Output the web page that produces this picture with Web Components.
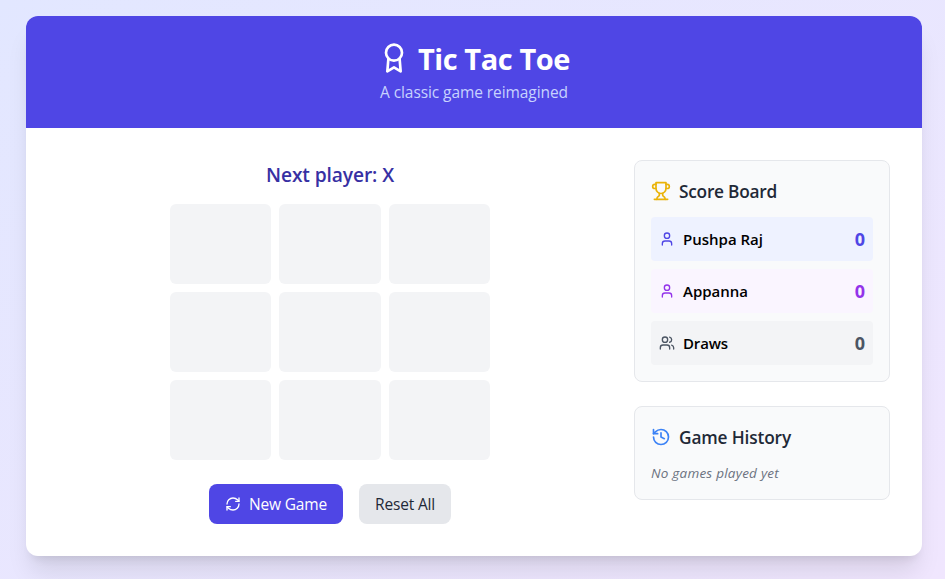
<!DOCTYPE html>
<html lang="en">
<head>
<meta charset="utf-8">
<title>Tic Tac Toe</title>
<style>
html,body{margin:0;height:100%}
body{font-family:"Segoe UI","Open Sans","Noto Sans",sans-serif;font-size:15.5px;line-height:24px;overflow:hidden;background:linear-gradient(to bottom right,#e2e7ff,#f0e6fe)}
</style>
</head>
<body>
<tic-tac-toe></tic-tac-toe>
<script>
const ICONS={
 award:'<path d="M16.2 12.5 17 22l-5-3-5 3 .8-9.5"/><circle cx="12" cy="8" r="6"/>',
 trophy:'<path d="M6 9H4.5a2.5 2.5 0 0 1 0-5H6"/><path d="M18 9h1.5a2.5 2.5 0 0 0 0-5H18"/><path d="M4 22h16"/><path d="M10 14.66V17c0 .55-.47.98-.97 1.21C7.85 18.75 7 20.24 7 22"/><path d="M14 14.66V17c0 .55.47.98.97 1.21C16.15 18.75 17 20.24 17 22"/><path d="M18 2H6v7a6 6 0 0 0 12 0V2Z"/>',
 user:'<path d="M19 21v-2a4 4 0 0 0-4-4H9a4 4 0 0 0-4 4v2"/><circle cx="12" cy="7" r="4"/>',
 users:'<path d="M16 21v-2a4 4 0 0 0-4-4H6a4 4 0 0 0-4 4v2"/><circle cx="9" cy="7" r="4"/><path d="M22 21v-2a4 4 0 0 0-3-3.87"/><path d="M16 3.13a4 4 0 0 1 0 7.75"/>',
 history:'<path d="M3 12a9 9 0 1 0 9-9 9.75 9.75 0 0 0-6.74 2.74L3 8"/><path d="M3 3v5h5"/><path d="M12 7v5l4 2"/>',
 refresh:'<path d="M3 12a9 9 0 0 1 9-9 9.75 9.75 0 0 1 6.74 2.74L21 8"/><path d="M21 3v5h-5"/><path d="M21 12a9 9 0 0 1-9 9 9.75 9.75 0 0 1-6.74-2.74L3 16"/><path d="M8 16H3v5"/>'
};
const define=(name,html,setup)=>customElements.define(name,class extends HTMLElement{
  constructor(){super();this.attachShadow({mode:'open'}).innerHTML=html}
  connectedCallback(){if(setup)setup(this,this.shadowRoot)}
});

define('ui-icon','<style>:host{display:block;flex:none}svg{display:block}</style><span></span>',(el,root)=>{
  const s=el.getAttribute('size')||16;
  root.querySelector('span').innerHTML=`<svg width="${s}" height="${s}" viewBox="0 0 24 24" fill="none" stroke="currentColor" stroke-width="2" stroke-linecap="round" stroke-linejoin="round">${ICONS[el.getAttribute('name')]}</svg>`;
});

/* Text label tracked so that it fills the given advance width. */
define('ui-label','<style>:host{display:block;white-space:nowrap;flex:none}:host([low]){padding-top:1px;margin-bottom:-1px}span{display:inline-block}</style><span><slot></slot></span>',(el,root)=>{
  const w=+el.getAttribute('width'),span=root.querySelector('span');
  const gap=(w-span.getBoundingClientRect().width)/el.textContent.length;
  el.style.width=w+'px';
  span.style.letterSpacing=gap.toFixed(3)+'px';
});

define('game-header',`<style>
:host{display:flex;flex-direction:column;align-items:center;gap:4px;box-sizing:border-box;height:112px;padding:24px;background:#4f46e5;color:#fff}
h1{display:flex;align-items:center;gap:8px;height:36px;margin:0;font-size:29px;line-height:36px;font-weight:700}
p{height:24px;margin:0;color:#c7d2fe}
</style><h1><ui-icon name="award" size="32"></ui-icon><ui-label low width="152">Tic Tac Toe</ui-label></h1><p><ui-label width="188">A classic game reimagined</ui-label></p>`);

define('game-cell','<style>:host{display:block;height:80px;border-radius:6px;background:#f3f4f6}</style>');

define('game-board',`<style>
:host{display:grid;grid-template-columns:repeat(3,1fr);gap:8px;width:320px}
</style>${'<game-cell></game-cell>'.repeat(9)}`);

define('ui-button',`<style>
:host{display:block}
button{display:flex;align-items:center;gap:8px;height:40px;padding:0 16px;border:0;border-radius:8px;font:inherit;background:#e5e7eb;color:#1f2937}
:host([primary]) button{background:#4f46e5;color:#fff}
</style><button><slot></slot></button>`);

define('side-panel',`<style>
:host{display:block;box-sizing:border-box;width:256px;padding:16px;border:1px solid #e5e7eb;border-radius:8px;background:#f9fafb}
h2{display:flex;align-items:center;gap:8px;height:28px;margin:0 0 12px;font-size:17.3px;line-height:28px;font-weight:560;color:#1f2937}
</style><h2><slot name="icon"></slot><slot name="title"></slot></h2><slot></slot>`);

define('score-row',`<style>
:host{display:flex;align-items:center;gap:8px;box-sizing:border-box;height:44px;padding:8px;border-radius:4px;margin-top:8px;background:var(--bg);color:var(--fg)}
:host(:first-of-type){margin-top:0}
.name{color:#000;font-weight:600;font-size:15px;margin-right:auto}
b{font-size:18px;line-height:28px;font-weight:700}
</style><slot name="icon"></slot><span class="name"><slot></slot></span><b><slot name="score"></slot></b>`);

define('tic-tac-toe',`<style>
:host{display:block;padding:16px 23px 0 26px}
.card{height:540px;border-radius:12px;overflow:hidden;background:#fff;box-shadow:0 20px 25px -5px rgb(0 0 0/.1),0 8px 10px -6px rgb(0 0 0/.1)}
main{display:flex;gap:32px;padding:32px}
.play{flex:1;display:flex;flex-direction:column;align-items:center}
.status{height:28px;font-size:19.2px;line-height:28px;font-weight:580;color:#3730a3;margin-bottom:16px}
.status ui-label{padding-top:1px}
.actions{display:flex;gap:16px;margin-top:24px}
aside{display:flex;flex-direction:column;gap:24px}
.empty{margin:0;font-size:13.5px;line-height:20px;font-style:italic;color:#6b7280}
</style>
<div class="card"><game-header></game-header><main>
<section class="play"><div class="status"><ui-label width="128">Next player: X</ui-label></div><game-board></game-board>
<div class="actions"><ui-button primary><ui-icon name="refresh"></ui-icon><ui-label width="78">New Game</ui-label></ui-button><ui-button><ui-label width="60">Reset All</ui-label></ui-button></div></section>
<aside>
<side-panel><ui-icon slot="icon" name="trophy" size="20" style="color:#eab308"></ui-icon><ui-label low slot="title" width="98">Score Board</ui-label>
<div><score-row style="--bg:#eef2ff;--fg:#4f46e5"><ui-icon slot="icon" name="user"></ui-icon><ui-label width="80">Pushpa Raj</ui-label><span slot="score">0</span></score-row>
<score-row style="--bg:#faf5ff;--fg:#9333ea"><ui-icon slot="icon" name="user"></ui-icon><ui-label width="65">Appanna</ui-label><span slot="score">0</span></score-row>
<score-row style="--bg:#f3f4f6;--fg:#4b5563"><ui-icon slot="icon" name="users"></ui-icon><ui-label width="45">Draws</ui-label><span slot="score">0</span></score-row></div></side-panel>
<side-panel><ui-icon slot="icon" name="history" size="20" style="color:#3b82f6"></ui-icon><ui-label low slot="title" width="112">Game History</ui-label>
<p class="empty"><ui-label width="128">No games played yet</ui-label></p></side-panel>
</aside></main></div>`);
</script>
</body>
</html>
